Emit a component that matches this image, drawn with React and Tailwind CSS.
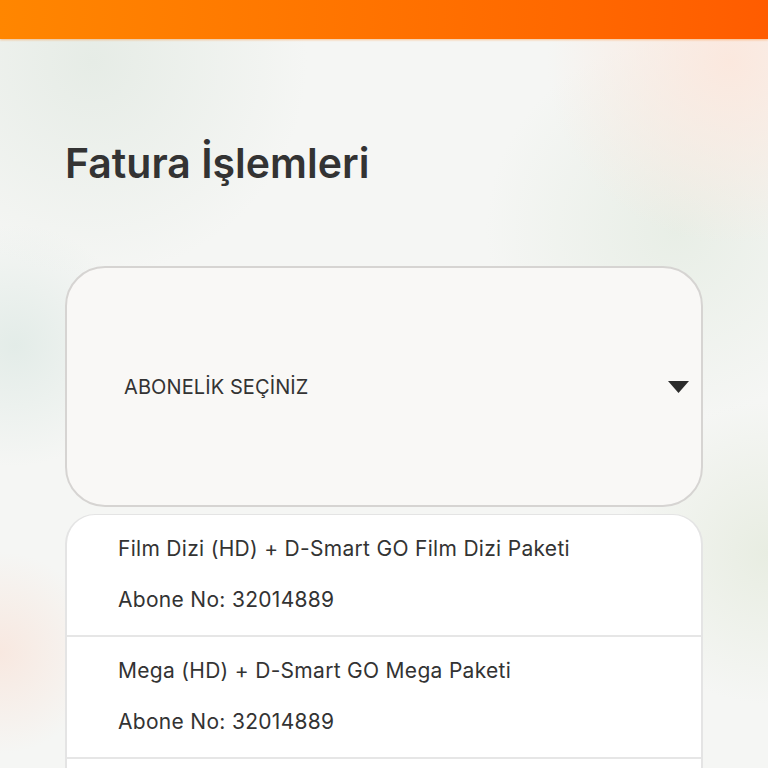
import { useState } from "react";

const subscriptions = [
  { name: "Film Dizi (HD) + D-Smart GO Film Dizi Paketi", no: "32014889" },
  { name: "Mega (HD) + D-Smart GO Mega Paketi", no: "32014889" },
];

function App() {
  const [open] = useState(true);

  return (
    <div className="h-[768px] overflow-hidden font-['Inter','Liberation_Sans',sans-serif] text-[#333] bg-[#f5f6f4] bg-[radial-gradient(circle_at_12%_8%,#e6ece6_0,transparent_22%),radial-gradient(circle_at_95%_8%,#fbe8de_0,transparent_18%),radial-gradient(circle_at_88%_30%,#e8eee6_0,transparent_22%),radial-gradient(circle_at_2%_45%,#e3ece8_0,transparent_14%),radial-gradient(circle_at_100%_72%,#e8ede2_0,transparent_16%),radial-gradient(circle_at_0%_85%,#f8e8e0_0,transparent_10%)]">
      {/* Header */}
      <div className="h-[39px] bg-gradient-to-r from-[#ff8600] to-[#ff5c00] shadow-[0_1px_2px_rgba(255,120,0,0.4)]" />

      <div className="px-[65px]">
        <h1 className="mt-[99px] text-[41px] leading-[50px] font-semibold text-[#333]">
          Fatura İşlemleri
        </h1>

        {/* Select */}
        <div className="mt-[78px] h-[241px] rounded-[40px] border-2 border-[#d6d4d2] bg-[#f9f8f6] flex items-center justify-between pl-[57px] pr-[11px]">
          <span className="text-[20px] tracking-[0.1px]">
            ABONELİK SEÇİNİZ
          </span>
          <svg width="21" height="12" viewBox="0 0 21 12" className="mr-[1px]">
            <path d="M0 0h21L10.5 12z" fill="#2b2b2b" />
          </svg>
        </div>

        {/* Options */}
        {open && (
          <div className="mt-[7px] h-[300px] rounded-t-[30px] border-x-2 border-t border-[#e4e4e4] bg-white">
            {subscriptions.map((s) => (
              <div
                key={s.name}
                className="pl-[51px] pt-[8px] pb-[10px] border-b-2 border-[#e6e6e6] text-[21px] tracking-[0.3px] leading-[51px] text-[#333]"
              >
                <div>{s.name}</div>
                <div>Abone No: {s.no}</div>
              </div>
            ))}
          </div>
        )}
      </div>
    </div>
  );
}

export default App;
